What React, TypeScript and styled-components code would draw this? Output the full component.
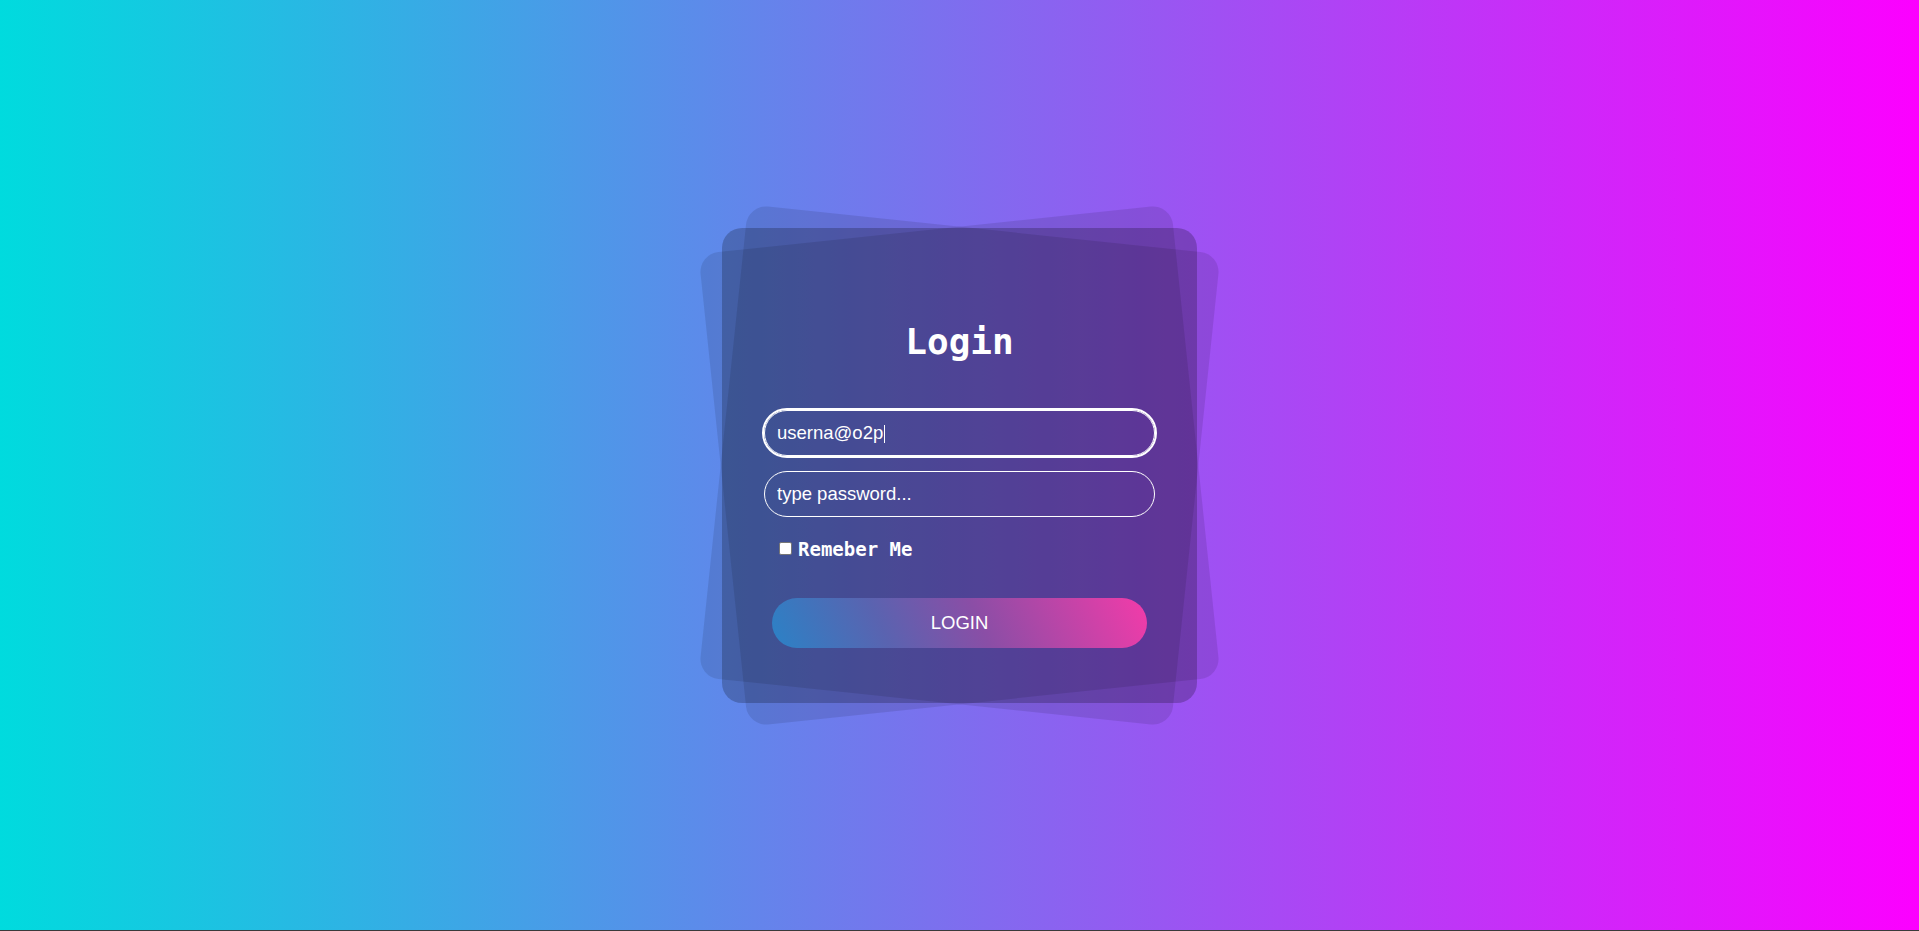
import React from "react";
import styled, { createGlobalStyle } from "styled-components";

const GlobalStyle = createGlobalStyle`
  html, body {
    margin: 0;
    padding: 0;
    background: #3a3a3a;
  }
  body {
    font-family: "Liberation Sans", Arial, sans-serif;
  }
  * { box-sizing: border-box; }
`;

const Page = styled.main`
  width: 100%;
  height: 930px;
  display: flex;
  align-items: center;
  justify-content: center;
  background: linear-gradient(to right, #00dbde 0%, #fc00ff 100%);
  overflow: hidden;
`;

const Stage = styled.div`
  position: relative;
  width: 475px;
  height: 475px;
`;

const BackCard = styled.div<{ $angle: number }>`
  position: absolute;
  inset: 0;
  border-radius: 20px;
  background: rgba(0, 0, 0, 0.1);
  transform: rotate(${(p) => p.$angle}deg);
`;

const Card = styled.form`
  position: relative;
  width: 475px;
  height: 475px;
  border-radius: 20px;
  background: rgba(0, 0, 0, 0.22);
  display: flex;
  flex-direction: column;
  align-items: center;
  padding-top: 93px;
`;

const Title = styled.h1`
  margin: 0;
  font-family: "DejaVu Sans Mono", monospace;
  font-weight: bold;
  font-size: 36px;
  line-height: 42px;
  color: #fff;
`;

const Field = styled.div<{ $gap: number }>`
  position: relative;
  margin-top: ${(p) => p.$gap}px;
`;

const Input = styled.input<{ $focused?: boolean }>`
  display: block;
  width: 391px;
  height: 46px;
  border: 1px solid #fff;
  border-radius: 23px;
  padding: 0 12px;
  background: transparent;
  color: #fff;
  font-family: "Liberation Sans", Arial, sans-serif;
  font-size: 18.5px;
  outline: ${(p) => (p.$focused ? "2px solid #fff" : "none")};
  &::placeholder {
    color: #fff;
    opacity: 1;
  }
`;

const Caret = styled.span`
  position: absolute;
  top: 15px;
  width: 1px;
  height: 18px;
  background: #fff;
`;

const CheckRow = styled.label`
  width: 391px;
  margin-top: 21px;
  padding-left: 15px;
  display: flex;
  align-items: center;
  gap: 6px;
  height: 22px;
  font-family: "DejaVu Sans Mono", monospace;
  font-weight: bold;
  font-size: 19px;
  color: #fff;
`;

const Check = styled.input`
  appearance: none;
  -webkit-appearance: none;
  margin: 0;
  width: 13px;
  height: 13px;
  background: #fff;
  border: 1px solid #767676;
  border-radius: 2px;
`;

const Button = styled.button`
  margin-top: 38px;
  width: 375px;
  height: 50px;
  border: none;
  border-radius: 25px;
  background: linear-gradient(65deg, #2b82c6 0%, #5a63b0 30%, #8a4ea6 55%, #f33ba9 100%);
  color: #fff;
  font-family: "Liberation Sans", Arial, sans-serif;
  font-size: 18.5px;
  cursor: pointer;
`;

export default function App() {
  return (
    <>
      <GlobalStyle />
      <Page>
        <Stage>
          <BackCard $angle={6} />
          <BackCard $angle={-6} />
          <Card onSubmit={(e) => e.preventDefault()}>
            <Title>Login</Title>
            <Field $gap={47}>
              <Input $focused type="text" defaultValue="userna@o2p" readOnly />
              <Caret style={{ left: 120 }} />
            </Field>
            <Field $gap={15}>
              <Input type="password" placeholder="type password..." />
            </Field>
            <CheckRow>
              <Check type="checkbox" />
              Remeber Me
            </CheckRow>
            <Button type="submit">LOGIN</Button>
          </Card>
        </Stage>
      </Page>
    </>
  );
}
